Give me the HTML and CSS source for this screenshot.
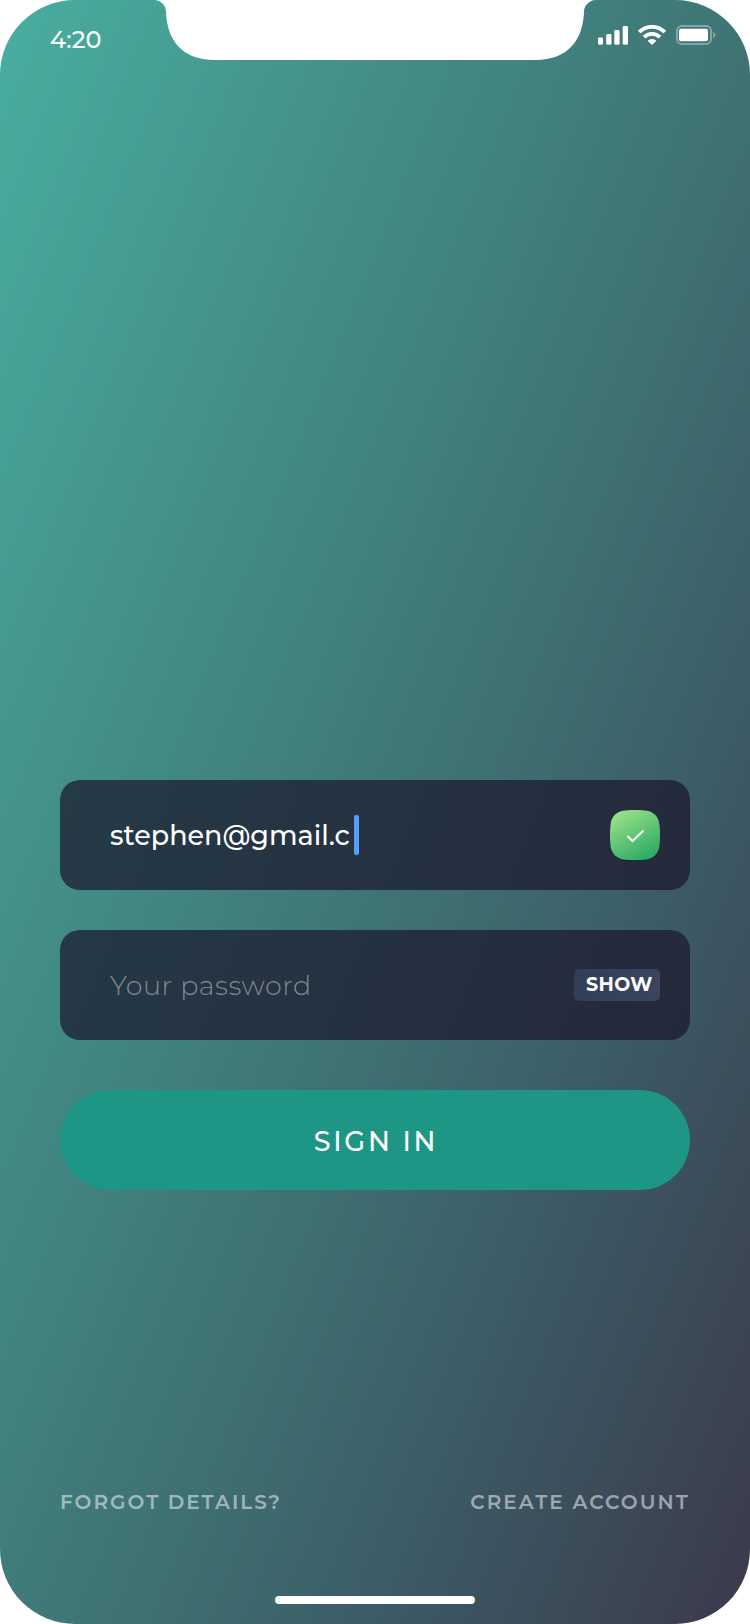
FILE: index.html
```html
<!DOCTYPE html>
<html lang="en">
<head>
<meta charset="utf-8">
<title>Sign in</title>
<link rel="stylesheet" href="styles.css">
</head>
<body>
<main class="screen">
  <svg class="notch" width="450" height="61" viewBox="0 0 450 61"><path fill="#fff" d="M5 0C12 1 16 6 16 12C17 38 30 60 65 60H385C420 60 433 38 434 12C434 6 438 1 445 0Z"/></svg>
  <header class="status">
    <span class="time">4:20</span>
    <svg class="signals" width="120" height="22" viewBox="0 0 120 22">
      <g fill="#fff">
        <rect x="1" y="12.5" width="5" height="7.2" rx="1.4"/>
        <rect x="9.2" y="9" width="5.3" height="10.7" rx="1.4"/>
        <rect x="17.3" y="5" width="5.3" height="14.7" rx="1.4"/>
        <rect x="25.7" y="1" width="5.3" height="18.7" rx="1.4"/>
      </g>
      <g fill="none" stroke="#fff" stroke-width="3.8">
        <path d="M42.2 7.2A18 18 0 0 1 67.8 7.2"/>
        <path d="M47 12.2A11.4 11.4 0 0 1 63 12.2"/>
      </g>
      <path fill="#fff" d="M50.6 15.7A6.3 6.3 0 0 1 59.4 15.7L55 20Z"/>
      <rect x="80" y="1" width="34" height="18" rx="4.8" fill="none" stroke="#fff" stroke-opacity=".35" stroke-width="2"/>
      <rect x="82" y="3.7" width="29" height="12.6" rx="2" fill="#fff"/>
      <path fill="#fff" fill-opacity=".35" d="M116.2 6.8Q118.6 8 118.6 10T116.2 13.2Z"/>
    </svg>
  </header>
  <form class="login">
    <div class="field">
      <span class="email">stephen@gmail.c</span><span class="caret"></span>
      <svg class="valid" width="50" height="50" viewBox="0 0 50 50">
        <defs><linearGradient id="green" x1=".2" y1="0" x2=".8" y2="1"><stop stop-color="#9be287"/><stop offset="1" stop-color="#28a864"/></linearGradient></defs>
        <path fill="url(#green)" d="M25 0C32 0 37 .5 40 1.5C44 3 47 6 48.5 10C49.5 13 50 18 50 25S49.5 37 48.5 40C47 44 44 47 40 48.5C37 49.5 32 50 25 50S13 49.5 10 48.5C6 47 3 44 1.5 40C.5 37 0 32 0 25S.5 13 1.5 10C3 6 6 3 10 1.5C13 .5 18 0 25 0Z"/>
        <path d="M17.500 26L22.500 31L33.500 20.500" fill="none" stroke="#fff" stroke-width="2"/>
      </svg>
    </div>
    <div class="field">
      <span class="placeholder">Your password</span>
      <span class="show">SHOW</span>
    </div>
    <div class="submit"><span class="submit-text">SIGN IN</span></div>
  </form>
  <footer class="links"><span class="forgot">FORGOT DETAILS?</span><span class="create">CREATE ACCOUNT</span></footer>
  <div class="home"></div>
</main>
</body>
</html>
```
FILE: styles.css
```css
* { box-sizing: border-box; }
body { margin: 0; background: #fff; font-family: Montserrat, Inter, sans-serif; font-weight: 500; color: #fff; }
.screen { position: relative; display: flex; flex-direction: column; width: 750px; height: 1624px; border-radius: 75px; overflow: hidden; background: linear-gradient(112deg, #49ae9f, #428a84 33%, #3e6d70 59%, #3c5963 75%, #3b394b); }
.notch { position: absolute; left: 150px; top: 0; }
.status { display: flex; justify-content: space-between; height: 780px; padding: 25px 33px 0 50px; flex-shrink: 0; }
.time { font-size: 24px; line-height: 30px; letter-spacing: 0; white-space: nowrap; }
.signals { display: block; }
.login { display: flex; flex-direction: column; gap: 40px; padding: 0 60px; }
.field { display: flex; align-items: center; height: 110px; padding: 0 30px 0 50px; border-radius: 20px; background: rgba(25, 22, 43, .7); white-space: nowrap; }
.email { width: 244px; font-size: 27px; letter-spacing: 0; }
.caret { width: 5px; height: 40px; border-radius: 2px; background: #549fff; }
.valid { margin-left: auto; }
.placeholder { font-size: 27px; font-weight: 300; letter-spacing: .5px; color: rgba(255, 255, 255, .42); }
.show { width: 86px; height: 32px; margin-left: auto; padding-left: 12px; border-radius: 5px; background: linear-gradient(100deg, #303e57, #3b455d); font-size: 19px; font-weight: 700; line-height: 31px; letter-spacing: .4px; }
.submit { display: flex; justify-content: center; align-items: center; height: 100px; margin-top: 10px; border-radius: 50px; background: #1e9686; }
.submit-text { padding: 3px 0 0 2px; font-size: 27px; letter-spacing: 2.7px; }
.links { display: flex; justify-content: space-between; margin-top: auto; padding: 0 60px; font-size: 20px; font-weight: 600; line-height: 24px; color: rgba(255, 255, 255, .5); letter-spacing: 2px; white-space: nowrap; }
.create { letter-spacing: 2.08px; }
.home { width: 200px; height: 8px; margin: 82px auto 20px; flex-shrink: 0; border-radius: 4px; background: #fff; }
```
